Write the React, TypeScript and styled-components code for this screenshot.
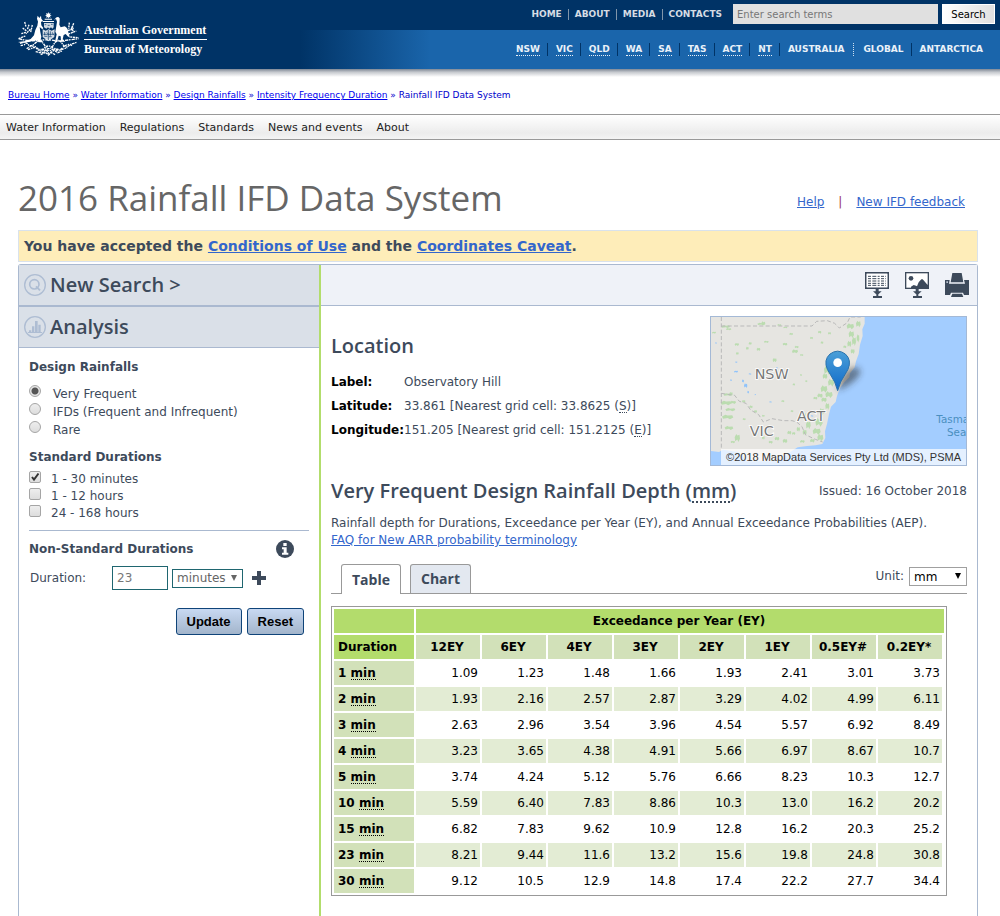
import React from 'react';
import styled, { createGlobalStyle } from 'styled-components';

const verdana = `Verdana, "DejaVu Sans", sans-serif`;
const trebuchet = `"Trebuchet MS", "Open Sans", sans-serif`;
const ink = '#3d4a5b';
const line = '#aab9d0';
const link = '#3366cc';

const Global = createGlobalStyle`
  *, *::before, *::after { box-sizing: border-box; }
  body { margin: 0; background: #fff; color: ${ink}; font: 12px/17px ${verdana}; }
  h1, h2, h3, p, dl, dd, fieldset, ul { margin: 0; padding: 0; border: 0; }
  ul { list-style: none; }
  svg { display: block; }
  abbr { text-decoration: none; border-bottom: 1px dotted currentColor; }
`;

/* ---------- Masthead ---------- */

const Masthead = styled.header`
  display: flex;
  height: 69px;
  background: linear-gradient(90deg, #003366 300px, #1a65ab 430px) 0 30px no-repeat, #003366;
`;
const Brand = styled.a`
  display: flex;
  flex: none;
  align-items: flex-start;
  padding: 12px 0 0 18px;
  gap: 5px;
  color: #fff;
  text-decoration: none;
`;
const BrandText = styled.span`
  display: block;
  padding-top: 9px;
  font: bold 12px/18px "Times New Roman", "Liberation Serif", serif;
`;
const BrandLine = styled.span<{ $ruled?: boolean }>`
  display: block;
  padding-right: 1px;
  border-bottom: ${(p) => (p.$ruled ? '1px solid #fff' : '0')};
  font-weight: 700;
`;
const MastheadNav = styled.div`
  display: flex;
  flex: 1;
  flex-direction: column;
  align-items: flex-end;
`;
const TopRow = styled.div`
  display: flex;
  align-items: center;
  height: 30px;
  padding: 0 5px 2px 0;
`;
const StateRow = styled.nav`
  display: flex;
  align-items: center;
  height: 39px;
  padding-right: 10px;
`;
const TopLink = styled.a`
  padding: 0 6px;
  border-left: 1px solid #8195aa;
  color: #d5dce4;
  font: bold 9px/11px ${verdana};
  text-decoration: none;
  &:first-child { border-left: 0; }
`;
const StateLink = styled.a<{ $divider?: 'dotted' | 'none'; $wide?: boolean }>`
  padding: 0 ${(p) => (p.$wide ? 9 : 7)}px 0 ${(p) => (p.$divider === 'dotted' ? 9 : 8)}px;
  border-left: 1px ${(p) => p.$divider ?? 'solid'} ${(p) => (p.$divider === 'dotted' ? '#cfe0f0' : '#003366')};
  color: #e9f1f9;
  font: bold 9px/13px ${verdana};
  text-decoration: none;
  abbr { display: block; line-height: 12px; }
`;
const SearchForm = styled.form`
  display: flex;
  gap: 4px;
  padding-left: 5px;
`;
const SearchBox = styled.input`
  width: 205px;
  height: 20px;
  padding: 0 4px;
  border: 0;
  background: #e0e0e0;
  font: 10px ${verdana};
  &::placeholder { color: #777; opacity: 1; }
`;
const SearchButton = styled.button`
  width: 53px;
  height: 20px;
  padding: 0;
  border: 1px solid #fff;
  background: linear-gradient(90deg, #fff, #e0e0e0);
  color: #000;
  font: 10px ${verdana};
`;
const Shade = styled.div`
  height: 8px;
  background: linear-gradient(#7d8795, #c6c9ce 40%, #fff);
`;
const Crumbs = styled.nav`
  padding: 10px 8px 11px;
  color: #0000cc;
  font-size: 9px;
  line-height: 16px;
  a { color: #0000ee; }
`;
const SectionNav = styled.nav`
  display: flex;
  gap: 14px;
  height: 26px;
  padding: 0 6px;
  border: solid #999;
  border-width: 1px 0;
  background: linear-gradient(#fff, #ececec 75%, #f4f4f4);
  a { color: #222; font-size: 11px; line-height: 26px; text-decoration: none; }
`;

/* ---------- Page heading ---------- */

const Page = styled.main`
  padding: 34px 22px 0 18px;
`;
const TitleRow = styled.div`
  display: flex;
  justify-content: space-between;
  align-items: center;
  height: 48px;
`;
const Title = styled.h1`
  color: #666;
  font: 400 35px/48px ${trebuchet};
`;
const HelpLinks = styled.div`
  display: flex;
  gap: 14px;
  padding: 8px 13px 0 0;
  color: #993355;
  a { color: ${link}; }
`;
const Notice = styled.p`
  margin: 8px 0 2px;
  padding: 1px 5px 0;
  border: 1px solid #d9e2ec;
  background: #feedb9;
  font-size: 14px;
  font-weight: 700;
  line-height: 29px;
  a { color: ${link}; }
`;
const Panel = styled.div`
  display: flex;
  min-height: 660px;
  border: 1px solid ${line};
  border-bottom: 0;
  border-radius: 3px 3px 0 0;
`;

/* ---------- Sidebar ---------- */

const Sidebar = styled.aside`
  flex: none;
  width: 302px;
  border-right: 2px solid #b2dd6c;
`;
const SideHeading = styled.h2<{ $thick?: boolean }>`
  display: flex;
  align-items: center;
  gap: 4px;
  height: ${(p) => (p.$thick ? 42 : 41)}px;
  padding-left: 5px;
  border-bottom: ${(p) => (p.$thick ? 2 : 1)}px solid ${line};
  background: #dae0e8;
  font: 600 20px/40px ${trebuchet};
`;
const SideBody = styled.form`
  padding: 9px 10px;
`;
const Group = styled.fieldset`
  min-width: 0;
  margin-bottom: 8px;
`;
const GroupTitle = styled.legend`
  padding: 0;
  font-weight: 700;
  line-height: 20px;
`;
const Options = styled.div<{ $gap: number }>`
  padding-top: ${(p) => p.$gap}px;
`;
const Option = styled.label<{ $round?: boolean }>`
  display: flex;
  gap: ${(p) => (p.$round ? 12 : 10)}px;
  line-height: ${(p) => (p.$round ? 18 : 17)}px;
`;
const Radio = styled.input.attrs({ type: 'radio' })`
  appearance: none;
  width: 12px;
  height: 12px;
  margin: 0;
  border: 1px solid #a5a5a5;
  border-radius: 50%;
  background: linear-gradient(#eee, #ddd);
  &:checked { background: radial-gradient(circle, #555 3px, #e6e6e6 4px); }
`;
const TickBox = styled.span`
  position: relative;
  width: 12px;
  height: 12px;
  svg { position: absolute; inset: 0; display: none; pointer-events: none; }
  input:checked + svg { display: block; }
`;
const Check = styled.input.attrs({ type: 'checkbox' })`
  appearance: none;
  display: block;
  width: 12px;
  height: 12px;
  margin: 0;
  border: 1px solid #a5a5a5;
  border-radius: 2px;
  background: linear-gradient(#eee, #ddd);
`;
const Custom = styled.div`
  padding-top: 8px;
  border-top: 1px solid ${line};
`;
const CustomTitle = styled.div`
  display: flex;
  justify-content: space-between;
  align-items: center;
  padding-right: 15px;
  h3 { font-size: 12px; line-height: 20px; }
`;
const IconButton = styled.button`
  display: block;
  padding: 0;
  border: 0;
  background: none;
  color: ${ink};
`;
const DurationRow = styled.div`
  display: flex;
  align-items: center;
  gap: 4px;
  margin-top: 7px;
  label { width: 79px; padding-left: 1px; }
`;
const DurationInput = styled.input`
  width: 56px;
  height: 24px;
  padding: 0 4px;
  border: 1px solid #1f6670;
  color: #777;
  font: 12px ${verdana};
`;
const Picker = styled.span<{ $muted?: boolean }>`
  position: relative;
  display: block;
  width: ${(p) => (p.$muted ? 71 : 58)}px;
  margin-right: ${(p) => (p.$muted ? 5 : 0)}px;
  color: ${(p) => (p.$muted ? '#666' : '#000')};
  select {
    appearance: none;
    display: block;
    width: 100%;
    height: 19px;
    padding: 0 4px;
    border: 1px solid ${(p) => (p.$muted ? '#1f6670' : '#a0a0a0')};
    border-radius: 0;
    background: #fff;
    color: inherit;
    font: 12px ${verdana};
  }
  svg { position: absolute; right: 6px; top: 6px; pointer-events: none; }
`;
const Actions = styled.div`
  display: flex;
  justify-content: flex-end;
  gap: 5px;
  padding: 18px 5px 0 0;
`;
const ActionButton = styled.button`
  height: 27px;
  padding: 0 10px;
  border: 1px solid #0f4479;
  border-radius: 3px;
  background: linear-gradient(#c8d9f2, #a3b5cb);
  color: #000;
  font: bold 13px "Liberation Sans", Arial, sans-serif;
`;

/* ---------- Results ---------- */

const Results = styled.section`
  flex: 1;
  min-width: 0;
`;
const Toolbar = styled.div`
  display: flex;
  justify-content: flex-end;
  align-items: center;
  gap: 16px;
  height: 41px;
  padding-right: 8px;
  border-bottom: 1px solid ${line};
  background: #eff2f8;
`;
const Content = styled.div`
  padding: 10px;
`;
const LocationRow = styled.div`
  display: flex;
  justify-content: space-between;
`;
const Heading = styled.h2`
  font: 600 20px/28px ${trebuchet};
  abbr { border-bottom-width: 2px; line-height: 20px; display: inline-block; }
`;
const LocationInfo = styled.div`
  padding-top: 16px;
`;
const Facts = styled.dl`
  display: grid;
  grid-template-columns: 73px auto;
  padding-top: 10px;
  line-height: 24px;
  dt { color: #000; font-weight: 700; white-space: nowrap; }
  abbr { display: inline-block; line-height: 11px; }
`;
const MapFrame = styled.div`
  position: relative;
  flex: none;
  width: 257px;
  height: 150px;
  overflow: hidden;
  border: 1px solid #a4b9d6;
`;
const Attribution = styled.div`
  position: absolute;
  right: 0;
  bottom: 0;
  padding: 0 5px;
  background: rgba(255, 255, 255, 0.7);
  color: #333;
  font: 11px/16px "Liberation Sans", Arial, sans-serif;
  white-space: nowrap;
`;
const DepthRow = styled.div`
  display: flex;
  justify-content: space-between;
  align-items: center;
  padding: 11px 0 10px;
`;
const Intro = styled.p`
  a { color: ${link}; }
`;
const TabRow = styled.div`
  display: flex;
  align-items: flex-end;
  gap: 9px;
  height: 45px;
  padding-left: 10px;
  border-bottom: 1px solid #999;
`;
const Tab = styled.button<{ $active?: boolean }>`
  height: ${(p) => (p.$active ? 30 : 29)}px;
  margin-bottom: ${(p) => (p.$active ? -1 : 0)}px;
  padding: 0 10px;
  border: 1px solid #999;
  border-bottom: 0;
  border-radius: 3px 3px 0 0;
  background: ${(p) => (p.$active ? '#fff' : '#e3e8f0')};
  color: ${ink};
  font: 700 14px/28px ${trebuchet};
`;
const Unit = styled.label`
  display: flex;
  align-items: center;
  gap: 5px;
  margin: 0 0 7px auto;
`;
const DepthTable = styled.table`
  width: 100%;
  max-width: 616px;
  margin-top: 12px;
  padding: 2px 2px 0;
  border: 1px solid #999;
  border-collapse: separate;
  border-spacing: 0;
  table-layout: fixed;
  color: #000;
  th, td {
    height: 26px;
    padding: 0 2px 0 0;
    border: solid #fff;
    border-width: 0 2px 2px 0;
    background-clip: padding-box;
    text-align: right;
  }
  thead th { background-color: #d2e1b9; text-align: center; }
  thead tr:first-child th, thead th:first-child { background-color: #b3dc6c; }
  thead tr:first-child th + th { border-right: 0; }
  tr th:first-child { padding-left: 4px; text-align: left; }
  tbody th { background-color: #d2e1b9; }
  tbody tr:nth-child(even) td { background-color: #e3ecd4; }
  abbr { display: inline-block; line-height: 11px; }
`;

/* ---------- Drawings ---------- */

const Emblem = () => (
  <svg width="61" height="44" viewBox="54 36 183 132" fill="#fff" aria-label="Coat of arms">
    <path d="M145 36l2 5 5-2-2 5 5 2-5 2 2 5-5-2-2 5-2-5-5 2 2-5-5-2 5-2-2-5 5 2z" />
    <path d="M134 56h22v3h-22zM128 63h34v3h-34z" />
    <path d="M113 47l5 7 5-7 1 9 5 6-6 4 1 10 6 8-3 4-8-7 2 15 3 14-2 9 8 7-14 1-4-6-12 1-13 4-22 3-11-3 20-2 18-7 10-11 4-16 6-13 2-12-3-9z" />
    <path d="M165 57q3-7 10-6 6 2 4 10l-1 13 4 8 12-3q10 5 11 18l5 16-7-4-6-7-6 3-3 13 8 7h-13l-1-16-6-2-5 18h-6l5-22-4-8 2-11 3-19-3-8-6 3z" />
    <path d="M132 69h29v13l-4 4-4-4-5 4-4-4-5 4-7-4zM128 88l9 4 9-4 9 4 9-4-1 23-18 13-17-13z" opacity=".82" />
    <g fill="none" stroke="#fff" strokeWidth="4">
      <path d="M74 66l4 14M87 74l-5 15M68 84l13 10M91 88l-13 13M64 101l15-4M56 116l20-8M97 75l-5 22" strokeDasharray="6 2" />
      <path d="M208 68l-2 18M221 70l-9 23M204 92l17-8M205 102l24-9M211 111l25 2M215 80l5 17" strokeDasharray="6 2" />
      <path d="M56 116q32 9 62 5t54 3l64-8" strokeDasharray="10 2 5 3" />
      <path d="M60 130q16-7 24 3t22-4 28 7 27-2 25-4 24 4l20-7" strokeDasharray="8 2 4 2" />
      <path d="M62 137l15-4M80 146q18-14 30-3t24 0 26 2 28-2 28-6M84 149l20-7 17 12 14-8 14 7 14-8 18 5 21-7" strokeDasharray="7 3 4 2" />
      <path d="M107 155l19 4 12-10 9 12 15-10 11 7 13-5M122 164l15-7 8 8 9-7 12 6" strokeDasharray="7 2" />
    </g>
    <g fill="none" stroke="#036" strokeWidth="2">
      <path d="M134 74h5M143 76h6M153 73h5M134 96v10M140 97l6 6M151 94v13M157 97l3 7M133 109h9M147 110h8M145 90v30M130 103h32" />
    </g>
  </svg>
);

const SearchBadge = () => (
  <svg width="22" height="22" viewBox="0 0 66 66" fill="none" stroke="#aebdd3" aria-hidden="true">
    <circle cx="33" cy="33" r="31" strokeWidth="4" />
    <circle cx="31" cy="31" r="14" strokeWidth="5" />
    <path d="M36 37l12 12" strokeWidth="6" />
  </svg>
);

const ChartBadge = () => (
  <svg width="22" height="22" viewBox="0 0 66 66" aria-hidden="true">
    <circle cx="33" cy="33" r="31" fill="none" stroke="#aebdd3" strokeWidth="4" />
    <path d="M15 43h7v7h-7zM24 31h7v19h-7zM33 15h8v35h-8zM43 26h7v24h-7zM12 48h42v3H12z" fill="#aebdd3" />
  </svg>
);

const DownArrow = () => <path d="M32 50h9v8h9L37 70 24 58h8zM24 72h27v6H24zM34 66h6v8h-6z" />;

const TableDownload = () => (
  <svg width="24" height="26" viewBox="0 0 72 78" fill={ink} aria-hidden="true">
    <path fillRule="evenodd" d="M0 0h72v51H0zM5 5v41h62V5z" />
    <rect x="5" y="5" width="62" height="41" fill="#fff" />
    <path d="M9 13h54M9 20h54M9 27h54M9 34h54M9 40h54" stroke={ink} strokeWidth="3" strokeDasharray="9 4 12 4 6 4" />
    <DownArrow />
  </svg>
);

const ImageDownload = () => (
  <svg width="24" height="26" viewBox="0 0 72 78" fill={ink} aria-hidden="true">
    <rect width="72" height="51" />
    <rect x="4" y="4" width="64" height="43" fill="#fff" />
    <circle cx="18" cy="19" r="7" />
    <path d="M18 48v-4l8-5 7 2 3 2 5-12 8-9h4l13 15 3 2v9z" />
    <DownArrow />
  </svg>
);

const Printer = () => (
  <svg width="24" height="24" viewBox="0 0 72 72" fill={ink} aria-hidden="true">
    <path d="M22 0h28l5 28H17zM0 21h14l-2 11h48l-3-11h15v45H57l-3-7H18l-3 7H0z" />
    <path d="M22 62h29l4 10H18z" />
    <path d="M4 25h5v5H4z" fill="#b9c2d0" />
  </svg>
);

const Caret = () => (
  <svg width="6" height="6" viewBox="0 0 6 6" fill="currentColor" aria-hidden="true">
    <path d="M0 0h6L3 6z" />
  </svg>
);

const Info = () => (
  <svg width="18" height="18" viewBox="0 0 54 54" fill={ink} aria-hidden="true">
    <circle cx="27" cy="27" r="27" />
    <path d="M22 9h10v9H22zM18 22h14v16h5v6H18v-6h5V28h-5z" fill="#fff" />
  </svg>
);

const Plus = () => (
  <svg width="14" height="14" viewBox="0 0 14 14" fill={ink} aria-hidden="true">
    <path d="M5 0h4v5h5v4H9v5H5V9H0V5h5z" />
  </svg>
);

const Tick = () => (
  <svg width="12" height="12" viewBox="0 0 12 12" fill="none" stroke="#333" strokeWidth="2" aria-hidden="true">
    <path d="M3 6l2 2.500L9.500 2.500" />
  </svg>
);

/* Patches of forest and lakes: x, y, width, height */
const forests = [
  [64, 436, 26, 8], [78, 444, 16, 7], [172, 428, 24, 8], [184, 424, 12, 12], [232, 432, 12, 6], [250, 440, 12, 5],
  [36, 455, 12, 6], [104, 489, 13, 9], [146, 486, 9, 9], [138, 500, 8, 10], [170, 503, 11, 10], [108, 516, 8, 9],
  [192, 482, 14, 7], [218, 534, 12, 13], [248, 488, 14, 9], [268, 458, 11, 8], [276, 508, 18, 12], [284, 497, 12, 8],
  [300, 522, 10, 6], [330, 470, 9, 8], [354, 452, 10, 9], [362, 484, 8, 8], [384, 456, 9, 8], [440, 430, 22, 18],
  [468, 422, 14, 20], [446, 452, 16, 22], [456, 470, 12, 28], [442, 482, 12, 20], [470, 462, 8, 26], [452, 506, 12, 16],
  [430, 496, 9, 9], [392, 524, 9, 7], [372, 556, 20, 28], [368, 580, 14, 18], [384, 596, 18, 24], [362, 616, 20, 22],
  [376, 634, 22, 20], [352, 640, 16, 14], [340, 650, 12, 9], [364, 652, 16, 15], [376, 668, 12, 22], [358, 684, 14, 22],
  [346, 714, 22, 26], [338, 744, 24, 20], [352, 762, 18, 22], [330, 776, 14, 12], [318, 722, 14, 26], [306, 698, 12, 17],
  [308, 748, 12, 18], [290, 740, 10, 15], [276, 756, 10, 9], [262, 752, 12, 12], [300, 780, 14, 9], [248, 776, 14, 14],
  [224, 770, 14, 12], [206, 782, 12, 9], [186, 768, 8, 11], [104, 762, 16, 24], [92, 782, 13, 8], [62, 662, 32, 14],
  [76, 684, 30, 10], [66, 704, 34, 14], [90, 662, 18, 10], [74, 738, 26, 12], [70, 640, 28, 8], [88, 636, 10, 10],
  [126, 660, 10, 8], [148, 676, 10, 9], [162, 690, 9, 9], [186, 704, 8, 7], [244, 660, 9, 7], [272, 690, 8, 7],
  [128, 714, 9, 7], [278, 610, 7, 7], [300, 582, 6, 6], [316, 600, 6, 7],
];
const lakes = [
  [132, 610, 10, 14], [126, 598, 6, 10], [102, 572, 12, 6], [142, 632, 5, 9], [106, 544, 6, 5], [146, 580, 8, 4],
  [90, 598, 6, 5], [228, 562, 6, 4], [208, 664, 7, 4], [332, 706, 8, 4], [46, 486, 4, 6], [164, 642, 4, 4],
];
const blob = ([x, y, w, h]: number[]) =>
  `M${x} ${y + h * 0.4}l${w * 0.3} ${-h * 0.4}l${w * 0.2} ${h * 0.2}l${w * 0.4} ${-h * 0.1}l${w * 0.1} ${h * 0.5}` +
  `l${-w * 0.3} ${h * 0.4}l${-w * 0.2} ${-h * 0.3}l${-w * 0.4} ${h * 0.2}z`;

const Map = () => (
  <svg width="255" height="148" viewBox="33 411 765 444" aria-label="Map of south-east Australia">
    <defs>
      <linearGradient id="pin" x1="0" y1="0" x2="0" y2="1">
        <stop offset="0" stopColor="#4a9fd8" />
        <stop offset="1" stopColor="#1069c9" />
      </linearGradient>
      <filter id="soft" x="-40%" y="-40%" width="180%" height="180%">
        <feGaussianBlur stdDeviation="9" />
      </filter>
    </defs>
    <rect x="33" y="411" width="765" height="444" fill="#a3cdff" />
    <path
      fill="#e6e5e1"
      d="M33 411h461v20l-7 17 1 20-8 26-4 28-8 22-4 18-14 18-2 12-15 14-13 18-9 24-4 18-14 14-6 22-6 30-6 22 1 20-9 18-20 4-26 2-28 4-22 14-20 18-22 10h-90l-10-16-16-12-44-7-12 7-26-3-12-14-14-15z"
    />
    <path d={forests.map(blob).join('')} fill="#bbdcb0" />
    <path d={lakes.map(blob).join('')} fill="#8fc3fb" />
    <g fill="none" stroke="#b9b9b9" strokeWidth="3" strokeDasharray="12 7">
      <path d="M64 411v400M64 438h272l14-14 32-2 22 8 14 14 24-16 8-17h32" />
      <path d="M64 640l40 6 14 18 20 6 14 20 24 14 14 22 26-10 34 6h26l14 4 16 14 10 24 30 14 22 8" />
    </g>
    <g fill="#777" stroke="#fff" strokeWidth="5" paintOrder="stroke" fontFamily="DejaVu Sans, sans-serif" fontSize="43">
      <text x="164" y="597">NSW</text>
      <text x="291" y="723">ACT</text>
      <text x="149" y="767">VIC</text>
    </g>
    <g fill="#4a8fc0" fontFamily="DejaVu Sans, sans-serif" fontSize="31">
      <text x="709" y="728">Tasma</text>
      <text x="741" y="767">Sea</text>
    </g>
    <path d="M413 632q10-50 36-66 30-10 32 10-10 30-68 56z" fill="#222" opacity=".5" filter="url(#soft)" />
    <path d="M413 632l-9-26-22-38q-12-28 8-46 23-17 46 0 20 18 8 46l-22 38z" fill="url(#pin)" stroke="#2a72ad" strokeWidth="3" />
    <circle cx="413" cy="548" r="13" fill="#fff" />
  </svg>
);

/* ---------- Data ---------- */

const states = ['NSW', 'VIC', 'QLD', 'WA', 'SA', 'TAS', 'ACT', 'NT'];
const columns = ['12EY', '6EY', '4EY', '3EY', '2EY', '1EY', '0.5EY#', '0.2EY*'];
const rows: [number, string][] = [
  [1, '1.09 1.23 1.48 1.66 1.93 2.41 3.01 3.73'],
  [2, '1.93 2.16 2.57 2.87 3.29 4.02 4.99 6.11'],
  [3, '2.63 2.96 3.54 3.96 4.54 5.57 6.92 8.49'],
  [4, '3.23 3.65 4.38 4.91 5.66 6.97 8.67 10.7'],
  [5, '3.74 4.24 5.12 5.76 6.66 8.23 10.3 12.7'],
  [10, '5.59 6.40 7.83 8.86 10.3 13.0 16.2 20.2'],
  [15, '6.82 7.83 9.62 10.9 12.8 16.2 20.3 25.2'],
  [23, '8.21 9.44 11.6 13.2 15.6 19.8 24.8 30.8'],
  [30, '9.12 10.5 12.9 14.8 17.4 22.2 27.7 34.4'],
];

export default function App() {
  return (
    <>
      <Global />
      <Masthead>
        <Brand href="#">
          <Emblem />
          <BrandText>
            <BrandLine $ruled>Australian Government</BrandLine>
            <BrandLine>Bureau of Meteorology</BrandLine>
          </BrandText>
        </Brand>
        <MastheadNav>
          <TopRow>
            {['HOME', 'ABOUT', 'MEDIA', 'CONTACTS'].map((t) => (
              <TopLink key={t} href="#">{t}</TopLink>
            ))}
            <SearchForm>
              <SearchBox aria-label="Enter search terms" placeholder="Enter search terms" />
              <SearchButton type="button">Search</SearchButton>
            </SearchForm>
          </TopRow>
          <StateRow>
            {states.map((s, i) => (
              <StateLink key={s} href="#" $divider={i === 0 ? 'none' : undefined}><abbr>{s}</abbr></StateLink>
            ))}
            <StateLink href="#" $wide>AUSTRALIA</StateLink>
            <StateLink href="#" $divider="dotted">GLOBAL</StateLink>
            <StateLink href="#">ANTARCTICA</StateLink>
          </StateRow>
        </MastheadNav>
      </Masthead>
      <Shade />
      <Crumbs>
        <a href="#">Bureau Home</a> » <a href="#">Water Information</a> » <a href="#">Design Rainfalls</a> »{' '}
        <a href="#">Intensity Frequency Duration</a> » Rainfall IFD Data System
      </Crumbs>
      <SectionNav>
        {['Water Information', 'Regulations', 'Standards', 'News and events', 'About'].map((t) => (
          <a key={t} href="#">{t}</a>
        ))}
      </SectionNav>

      <Page>
        <TitleRow>
          <Title>2016 Rainfall IFD Data System</Title>
          <HelpLinks>
            <a href="#">Help</a>
            <span>|</span>
            <a href="#">New IFD feedback</a>
          </HelpLinks>
        </TitleRow>
        <Notice>
          You have accepted the <a href="#">Conditions of Use</a> and the <a href="#">Coordinates Caveat</a>.
        </Notice>
        <Panel>
          <Sidebar>
            <SideHeading $thick><SearchBadge />New Search &gt;</SideHeading>
            <SideHeading><ChartBadge />Analysis</SideHeading>
            <SideBody>
              <Group>
                <GroupTitle>Design Rainfalls</GroupTitle>
                <Options $gap={8}>
                  {['Very Frequent', 'IFDs (Frequent and Infrequent)', 'Rare'].map((t, i) => (
                    <Option key={t} $round><Radio name="design" defaultChecked={i === 0} />{t}</Option>
                  ))}
                </Options>
              </Group>
              <Group>
                <GroupTitle>Standard Durations</GroupTitle>
                <Options $gap={4}>
                  {['1 - 30 minutes', '1 - 12 hours', '24 - 168 hours'].map((t, i) => (
                    <Option key={t}>
                      <TickBox><Check defaultChecked={i === 0} /><Tick /></TickBox>{t}
                    </Option>
                  ))}
                </Options>
              </Group>
              <Custom>
                <CustomTitle>
                  <h3>Non-Standard Durations</h3>
                  <IconButton type="button" aria-label="Information"><Info /></IconButton>
                </CustomTitle>
                <DurationRow>
                  <label htmlFor="duration">Duration:</label>
                  <DurationInput id="duration" defaultValue="23" />
                  <Picker $muted>
                    <select aria-label="Duration unit"><option>minutes</option><option>hours</option></select>
                    <Caret />
                  </Picker>
                  <IconButton type="button" aria-label="Add duration"><Plus /></IconButton>
                </DurationRow>
                <Actions>
                  <ActionButton type="button">Update</ActionButton>
                  <ActionButton type="button">Reset</ActionButton>
                </Actions>
              </Custom>
            </SideBody>
          </Sidebar>
          <Results>
            <Toolbar>
              <IconButton aria-label="Download table"><TableDownload /></IconButton>
              <IconButton aria-label="Download image"><ImageDownload /></IconButton>
              <IconButton aria-label="Print"><Printer /></IconButton>
            </Toolbar>
            <Content>
              <LocationRow>
                <LocationInfo>
                  <Heading>Location</Heading>
                  <Facts>
                    <dt>Label:</dt><dd>Observatory Hill</dd>
                    <dt>Latitude:</dt><dd>33.861 [Nearest grid cell: 33.8625 (<abbr>S</abbr>)]</dd>
                    <dt>Longitude:</dt><dd>151.205 [Nearest grid cell: 151.2125 (<abbr>E</abbr>)]</dd>
                  </Facts>
                </LocationInfo>
                <MapFrame>
                  <Map />
                  <Attribution>©2018 MapData Services Pty Ltd (MDS), PSMA</Attribution>
                </MapFrame>
              </LocationRow>
              <DepthRow>
                <Heading>Very Frequent Design Rainfall Depth (<abbr>mm</abbr>)</Heading>
                <span>Issued: 16 October 2018</span>
              </DepthRow>
              <Intro>
                Rainfall depth for Durations, Exceedance per Year (EY), and Annual Exceedance Probabilities (AEP).
                <br />
                <a href="#">FAQ for New ARR probability terminology</a>
              </Intro>
              <TabRow>
                <Tab $active>Table</Tab>
                <Tab>Chart</Tab>
                <Unit>
                  Unit:
                  <Picker>
                    <select><option>mm</option><option>mm/h</option></select>
                    <Caret />
                  </Picker>
                </Unit>
              </TabRow>
              <DepthTable>
                <colgroup>
                  <col width="82" />
                  {columns.map((c) => <col key={c} />)}
                </colgroup>
                <thead>
                  <tr><th /><th colSpan={8}>Exceedance per Year (EY)</th></tr>
                  <tr><th>Duration</th>{columns.map((c) => <th key={c}>{c}</th>)}</tr>
                </thead>
                <tbody>
                  {rows.map(([n, values]) => (
                    <tr key={n}>
                      <th scope="row">{n} <abbr>min</abbr></th>
                      {values.split(' ').map((v, i) => <td key={i}>{v}</td>)}
                    </tr>
                  ))}
                </tbody>
              </DepthTable>
            </Content>
          </Results>
        </Panel>
      </Page>
    </>
  );
}
